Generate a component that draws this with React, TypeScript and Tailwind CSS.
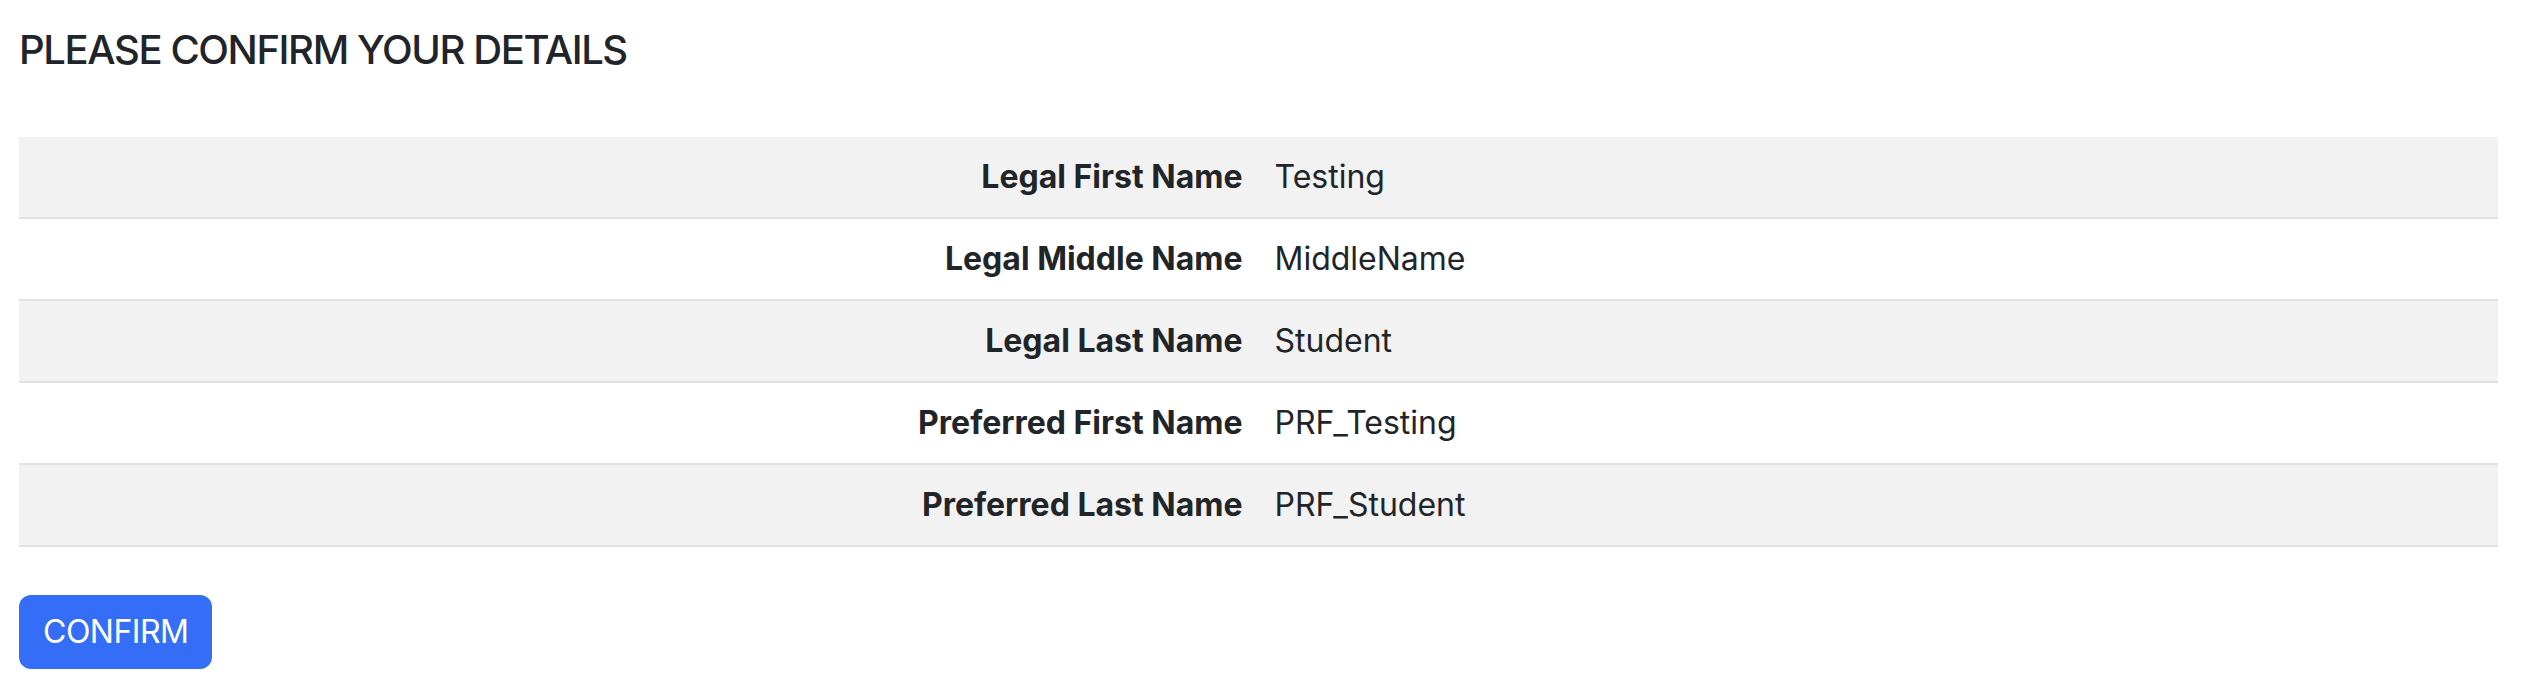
import React from "react";

const rows = [
  { label: "Legal First Name", value: "Testing" },
  { label: "Legal Middle Name", value: "MiddleName" },
  { label: "Legal Last Name", value: "Student" },
  { label: "Preferred First Name", value: "PRF_Testing" },
  { label: "Preferred Last Name", value: "PRF_Student" },
];

export default function App() {
  return (
    <div
      className="min-h-[698px] bg-white pl-[19px] pr-[34px] pt-[26px] text-[#212529]"
      style={{ fontFamily: "Inter, 'Noto Sans', sans-serif" }}
    >
      <h5 className="text-[40px] leading-[48px] font-medium tracking-[-1.4px]">
        PLEASE CONFIRM YOUR DETAILS
      </h5>

      <table className="mt-[63px] w-full border-collapse text-[32px] leading-[48px]">
        <tbody>
          {rows.map((row, i) => (
            <tr
              key={row.label}
              className={
                i % 2 === 0
                  ? "bg-[#f2f2f2] border-b-2 border-[#dee2e6]"
                  : "bg-white border-b-2 border-[#dee2e6]"
              }
            >
              <td className="w-1/2 px-4 py-4 text-right font-bold">{row.label}</td>
              <td className="w-1/2 px-4 py-4">{row.value}</td>
            </tr>
          ))}
        </tbody>
      </table>

      <button className="mt-[48px] rounded-[12px] bg-[#356ef6] px-6 py-[13px] text-[32px] leading-[48px] text-white tracking-[-0.5px]">
        CONFIRM
      </button>
    </div>
  );
}
